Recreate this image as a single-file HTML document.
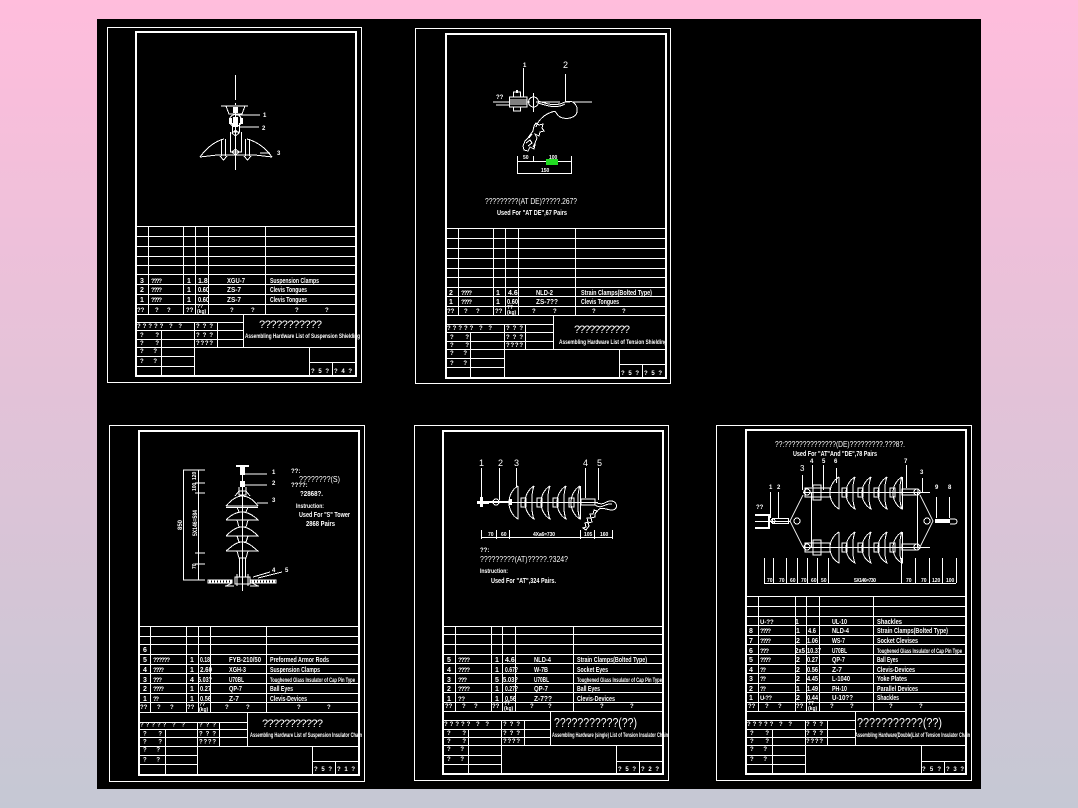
<!DOCTYPE html>
<html><head><meta charset="utf-8"><title>Drawings</title>
<style>
html,body{margin:0;padding:0;width:1078px;height:808px;overflow:hidden;background:linear-gradient(#ffbddc,#c5c8d4)}
svg{position:absolute;left:0;top:0;display:block}
path,rect.l,circle{fill:none;stroke:#fff;stroke-width:1;shape-rendering:crispEdges}
rect.l.f{stroke-width:2}
.w{fill:#fff}
text{fill:#fff;font:700 7px "Liberation Sans",sans-serif}
text.a{font-size:6px}text.b{font-size:8px;font-weight:400}text.c{font-size:9px;font-weight:400}text.d{font-size:11px;font-weight:400}text.e{font-size:13px;font-weight:400}text.g{font-size:5px}
</style></head><body>
<svg width="1078" height="808" viewBox="0 0 1078 808" xmlns="http://www.w3.org/2000/svg">
<rect x="97" y="19" width="884" height="770" fill="#000"/>

<!-- SHEET 1 -->
<rect class="l" x="107.500" y="27.500" width="254" height="355"/>
<rect class="l f" x="136" y="32" width="220" height="344"/>
<path d="M136 226.500H356M136 236.500H356M136 246.500H356M136 256.500H356M136 265.500H356M136 274.500H356M136 284.500H356M136 294.500H356M136 304.500H356M136 314.500H356M148.500 226V314M183.500 226V314M195.500 226V314M208.500 226V314M265.500 226V314
M136 322.500H243M136 330.500H243M136 339.500H243M136 347.500H356M136 356.500H194M136 366.500H194M243.500 314V347M161.500 330V376M194.500 322V376M217.500 322V347M309.500 347V376M309 362.500H356M332.500 362V376"/>
<path d="M235.500 75V100M235.500 103V105M235.500 108V170M221 106H248M226 106L229 114H242L245 106M235 115H260M240 127H259M232.500 123V132H239.500V123M230.500 132V152H241.500V132M200 157C208 146,216 141,224 139M247 139C255 141,264 146,272 157M200 157L217 155H255L272 157M221.500 139V156M225.500 139V156M245.500 139V156M249.500 139V156M220 156L223.500 160L227 156M244 156L247.500 160L251 156M232 152L235.500 149L239 152L235.500 155ZM260 153H270M232 133L235.500 130L239 133L235.500 136Z"/>
<rect class="w" x="233" y="107" width="5" height="6"/><rect class="w" x="233" y="117" width="5" height="10"/>
<circle cx="235.500" cy="120.500" r="6"/><rect class="w" x="229" y="118" width="3" height="6"/><rect class="w" x="240" y="118" width="3" height="6"/>
<text x="263" y="117" class="a">1</text><text x="262" y="130" class="a">2</text><text x="277" y="155" class="a">3</text>
<text x="140" y="283">3</text><text x="151" y="283" textLength="11" class="a">????</text><text x="187" y="283">1</text><text x="198" y="283">1.8</text><text x="227" y="283" textLength="18" lengthAdjust="spacingAndGlyphs">XGU-7</text><text x="270" y="283" textLength="49" lengthAdjust="spacingAndGlyphs">Suspension Clamps</text>
<text x="140" y="292">2</text><text x="151" y="292" textLength="11" class="a">????</text><text x="187" y="292">1</text><text x="198" y="292" textLength="11" lengthAdjust="spacingAndGlyphs">0.60</text><text x="227" y="292" textLength="14" lengthAdjust="spacingAndGlyphs">ZS-7</text><text x="270" y="292" textLength="37" lengthAdjust="spacingAndGlyphs">Clevis Tongues</text>
<text x="140" y="302">1</text><text x="151" y="302" textLength="11" class="a">????</text><text x="187" y="302">1</text><text x="198" y="302" textLength="11" lengthAdjust="spacingAndGlyphs">0.60</text><text x="227" y="302" textLength="14" lengthAdjust="spacingAndGlyphs">ZS-7</text><text x="270" y="302" textLength="37" lengthAdjust="spacingAndGlyphs">Clevis Tongues</text>
<text x="137" y="312" class="a">??</text><text x="155" y="312" class="a">?</text><text x="167" y="312" class="a">?</text><text x="186" y="312" class="a">??</text><text x="197" y="308" class="g">??</text><text x="197" y="313" class="g">(kg)</text><text x="230" y="312" class="a">?</text><text x="251" y="312" class="a">?</text><text x="295" y="312" class="a">?</text><text x="325" y="312" class="a">?</text>
<text x="259" y="328" class="d" textLength="63">???????????</text>
<text x="245" y="338" class="a" textLength="115" lengthAdjust="spacingAndGlyphs">Assembling Hardware List of Suspension Shielding</text>
<g><text x="137" y="328" class="a" textLength="45">????? ? ?</text><text x="196" y="328" class="a" textLength="17">? ? ?</text><text x="140" y="337" class="a" textLength="19">? ?</text><text x="196" y="337" class="a" textLength="17">? ? ?</text><text x="140" y="345" class="a" textLength="19">? ?</text><text x="196" y="345" class="a" textLength="17">????</text><text x="140" y="353" class="a" textLength="17">? ?</text><text x="140" y="363" class="a" textLength="17">? ?</text></g>
<text x="311" y="373" class="a" textLength="18">? 5 ?</text><text x="334" y="373" class="a" textLength="18">? 4 ?</text>

<!-- SHEET 2 -->
<rect class="l" x="415.500" y="28.500" width="255" height="355"/>
<rect class="l f" x="446" y="34" width="220" height="344"/>
<path d="M446 228.500H666M446 238.500H666M446 248.500H666M446 258.500H666M446 268.500H666M446 277.500H666M446 287.500H666M446 296.500H666M446 306.500H666M446 315.500H666M458.500 228V315M493.500 228V315M505.500 228V315M518.500 228V315M575.500 228V315
M446 324.500H553M446 332.500H553M446 341.500H553M446 349.500H666M446 358.500H504M446 367.500H504M553.500 315V349M470.500 332V378M504.500 324V378M525.500 324V349M619.500 349V378M619 364.500H666M642.500 364V378"/>
<path d="M523.500 68V97M565.500 74V102M493 102H530M536 102H560M565 102H570M573 102H592M509.500 97H527V107H509.500ZM509 100H527M509 104H527M513.500 92V97H520.500V92ZM513.500 107V111H520.500V107ZM496 105H509M533.500 93V112"/>
<circle cx="533.500" cy="102" r="5"/><rect class="w" x="516" y="90" width="2" height="3"/>
<path d="M538 101C548 104,555 107,565 102C574 99,578 106,577 112C576 118,566 120,560 117C555 114,557 110,552 112C545 114,538 120,536 127M538 103C548 106,556 109,565 104"/>
<path d="M536 123L539 125L543 124L542 128L544 131L540 132L539 136L535 134L537 138L535 143L533 147L535 145L534 149L530 147L528 151L524 150L523 146L525 141L528 138L530 135L533 131L534 126ZM529 138L532 134M526 143L530 140L532 143L528 146"/>
<path d="M517.500 156V174M571.500 156V174M517 161.500H571M517 173.500H571M533.500 156V162"/>
<rect x="546" y="159" width="12" height="6" fill="#22dc22"/>
<text x="523" y="159" class="g">50</text><text x="549" y="159" class="g">100</text><text x="541" y="172" class="g">150</text>
<text x="523" y="67" class="a">1</text><text x="563" y="68" class="c">2</text><text x="496" y="99" class="a">??</text>
<text x="485" y="204" class="b" textLength="92" lengthAdjust="spacingAndGlyphs">?????????(AT DE)?????.267?</text>
<text x="497" y="215" textLength="70" lengthAdjust="spacingAndGlyphs">Used For "AT DE",67 Pairs</text>
<text x="449" y="295">2</text><text x="461" y="295" textLength="11" class="a">????</text><text x="496" y="295">1</text><text x="508" y="295">4.6</text><text x="536" y="295" textLength="17" lengthAdjust="spacingAndGlyphs">NLD-2</text><text x="581" y="295" textLength="71" lengthAdjust="spacingAndGlyphs">Strain Clamps(Bolted Type)</text>
<text x="449" y="304">1</text><text x="461" y="304" textLength="11" class="a">????</text><text x="496" y="304">1</text><text x="507" y="304" textLength="11" lengthAdjust="spacingAndGlyphs">0.60</text><text x="536" y="304" textLength="22" lengthAdjust="spacingAndGlyphs">ZS-7??</text><text x="581" y="304" textLength="38" lengthAdjust="spacingAndGlyphs">Clevis Tongues</text>
<text x="447" y="313" class="a">??</text><text x="464" y="313" class="a">?</text><text x="476" y="313" class="a">?</text><text x="495" y="313" class="a">??</text><text x="507" y="309" class="g">??</text><text x="507" y="314" class="g">(kg)</text><text x="532" y="313" class="a">?</text><text x="553" y="313" class="a">?</text><text x="592" y="313" class="a">?</text><text x="622" y="313" class="a">?</text>
<text x="574" y="333" class="d" textLength="56">???????????</text>
<text x="559" y="344" class="a" textLength="108" lengthAdjust="spacingAndGlyphs">Assembling Hardware List of Tension Shielding</text>
<g transform="translate(310,2)"><text x="137" y="328" class="a" textLength="45">????? ? ?</text><text x="196" y="328" class="a" textLength="17">? ? ?</text><text x="140" y="337" class="a" textLength="19">? ?</text><text x="196" y="337" class="a" textLength="17">? ? ?</text><text x="140" y="345" class="a" textLength="19">? ?</text><text x="196" y="345" class="a" textLength="17">????</text><text x="140" y="353" class="a" textLength="17">? ?</text><text x="140" y="363" class="a" textLength="17">? ?</text></g>
<text x="621" y="375" class="a" textLength="18">? 5 ?</text><text x="644" y="375" class="a" textLength="18">? 5 ?</text>

<!-- SHEET 3 -->
<rect class="l" x="109.500" y="425.500" width="255" height="356"/>
<rect class="l f" x="139" y="431" width="220" height="344"/>
<path d="M139 626.500H359M139 636.500H359M139 644.500H359M139 654.500H359M139 664.500H359M139 673.500H359M139 683.500H359M139 693.500H359M139 702.500H359M139 712.500H359M150.500 626V712M186.500 626V712M198.500 626V712M210.500 626V712M266.500 626V712
M139 722.500H247M139 729.500H247M139 737.500H247M139 746.500H359M139 755.500H197M139 764.500H197M247.500 712V746M165.500 729V775M197.500 722V775M219.500 722V746M312.500 746V775M312 761.500H359M335.500 761V775"/>
<path d="M242.500 465V591M243 474H267M243 485H267M257 503H268"/>
<rect class="w" x="236" y="465" width="13" height="2"/><rect class="w" x="240" y="467" width="5" height="8"/><rect class="w" x="240" y="481" width="5" height="6"/>
<path d="M239 487V495H246V487M226 506C232 499,237 496,242 496C248 496,253 499,258 506M226 506H258M226 507.500H258M235 496L239 491H246L250 496M226 520C231 515,236 512,242 512C248 512,253 515,258 520H226M237 507L239 512H246L248 507M226 536C231 531,236 527,242 527C248 527,253 531,258 536H226M237 520L239 527H246L248 520M226 551C231 547,236 542,242 542C248 542,253 547,258 551H226M237 536L239 542H246L248 536M237 551L239 558H246L248 551M239.500 558V577M245.500 558V577M235 577H250V584H235ZM237 574V586M248 574V586"/>
<path d="M208 580H232V583H208ZM251 580H276V583H251Z"/><path d="M209 581.500H232M252 581.500H275" stroke-dasharray="2 1" style="stroke-width:2"/>
<path d="M225 586H234M250 586H259M226 586L232 583M258 586L252 583M253 577L270 572M258 578L282 572"/>
<path d="M183.500 470V580M183 470H205M183 580H205M198.500 470V580M195 483H205M195 493H205M195 553H205M195 564H205"/>
<text transform="translate(182,530) rotate(-90)" class="a">850</text>
<text transform="translate(197,536) rotate(-90)" class="a" textLength="26" lengthAdjust="spacingAndGlyphs">5X146=584</text>
<text transform="translate(196,480) rotate(-90)" class="g">120</text><text transform="translate(196,491) rotate(-90)" class="g">100</text><text transform="translate(196,569) rotate(-90)" class="g">70</text>
<text x="272" y="474" class="a">1</text><text x="272" y="485" class="a">2</text><text x="272" y="502" class="a">3</text><text x="272" y="572" class="a">4</text><text x="285" y="572" class="a">5</text>
<text x="291" y="473" class="a">??:</text><text x="299" y="482" class="b" textLength="41" lengthAdjust="spacingAndGlyphs">????????(S)</text><text x="291" y="487" class="a">????:</text><text x="300" y="496" textLength="23" lengthAdjust="spacingAndGlyphs">?2868?.</text>
<text x="296" y="508" class="a" textLength="28" lengthAdjust="spacingAndGlyphs">Instruction:</text><text x="299" y="517" textLength="51" lengthAdjust="spacingAndGlyphs">Used For "S" Tower</text><text x="306" y="526" textLength="29" lengthAdjust="spacingAndGlyphs">2868 Pairs</text>
<text x="143" y="652">6</text>
<text x="143" y="662">5</text><text x="153" y="662" textLength="17" class="a">??????</text><text x="190" y="662">1</text><text x="200" y="662" textLength="10" lengthAdjust="spacingAndGlyphs">0.18</text><text x="229" y="662" textLength="32" lengthAdjust="spacingAndGlyphs">FYB-210/50</text><text x="270" y="662" textLength="59" lengthAdjust="spacingAndGlyphs">Preformed Armor Rods</text>
<text x="143" y="672">4</text><text x="153" y="672" textLength="11" class="a">????</text><text x="190" y="672">1</text><text x="200" y="672" textLength="12" lengthAdjust="spacingAndGlyphs">2.60</text><text x="229" y="672" textLength="17" lengthAdjust="spacingAndGlyphs">XGH-3</text><text x="270" y="672" textLength="50" lengthAdjust="spacingAndGlyphs">Suspension Clamps</text>
<text x="143" y="682">3</text><text x="153" y="682" textLength="9" class="a">???</text><text x="190" y="682">4</text><text x="198" y="682" textLength="14" lengthAdjust="spacingAndGlyphs">5.03?</text><text x="229" y="682" textLength="15" lengthAdjust="spacingAndGlyphs">U70BL</text><text x="270" y="682" class="a" textLength="85" lengthAdjust="spacingAndGlyphs">Toughened Glass Insulator of Cap Pin Type</text>
<text x="143" y="691">2</text><text x="153" y="691" textLength="11" class="a">????</text><text x="190" y="691">1</text><text x="200" y="691" textLength="11" lengthAdjust="spacingAndGlyphs">0.27</text><text x="229" y="691" textLength="13" lengthAdjust="spacingAndGlyphs">QP-7</text><text x="270" y="691" textLength="23" lengthAdjust="spacingAndGlyphs">Ball Eyes</text>
<text x="143" y="701">1</text><text x="153" y="701" textLength="6" class="a">??</text><text x="190" y="701">1</text><text x="200" y="701" textLength="11" lengthAdjust="spacingAndGlyphs">0.56</text><text x="229" y="701" textLength="10" lengthAdjust="spacingAndGlyphs">Z-7</text><text x="270" y="701" textLength="37" lengthAdjust="spacingAndGlyphs">Clevis-Devices</text>
<text x="140" y="709" class="a">??</text><text x="157" y="709" class="a">?</text><text x="170" y="709" class="a">?</text><text x="187" y="709" class="a">??</text><text x="199" y="706" class="g">??</text><text x="199" y="711" class="g">(kg)</text><text x="225" y="709" class="a">?</text><text x="246" y="709" class="a">?</text><text x="297" y="709" class="a">?</text><text x="327" y="709" class="a">?</text>
<text x="262" y="727" class="d" textLength="61">???????????</text>
<text x="250" y="737" class="a" textLength="112" lengthAdjust="spacingAndGlyphs">Assembling Hardware List of Suspension Insulator Chain</text>
<g transform="translate(3,398.500)"><text x="137" y="328" class="a" textLength="45">????? ? ?</text><text x="196" y="328" class="a" textLength="17">? ? ?</text><text x="140" y="337" class="a" textLength="19">? ?</text><text x="196" y="337" class="a" textLength="17">? ? ?</text><text x="140" y="345" class="a" textLength="19">? ?</text><text x="196" y="345" class="a" textLength="17">????</text><text x="140" y="353" class="a" textLength="17">? ?</text><text x="140" y="363" class="a" textLength="17">? ?</text></g>
<text x="314" y="771" class="a" textLength="18">? 5 ?</text><text x="337" y="771" class="a" textLength="18">? 1 ?</text>

<!-- SHEET 4 -->
<rect class="l" x="414.500" y="425.500" width="254" height="355"/>
<rect class="l f" x="443" y="431" width="220" height="343"/>
<path d="M443 626.500H663M443 634.500H663M443 644.500H663M443 654.500H663M443 663.500H663M443 673.500H663M443 683.500H663M443 692.500H663M443 702.500H663M443 711.500H663M455.500 626V711M491.500 626V711M502.500 626V711M515.500 626V711M573.500 626V711
M443 720.500H550M443 729.500H550M443 737.500H550M443 745.500H663M443 755.500H501M443 764.500H501M550.500 711V745M468.500 729V774M501.500 720V774M524.500 720V745M616.500 745V774M616 761.500H663M639.500 761V774"/>
<path d="M481.500 468V500M499.500 468V500M516.500 468V487M585.500 468V498M598.500 468V500M477 502.500H598"/>
<rect class="w" x="480" y="497" width="3" height="10"/><rect class="w" x="477" y="501" width="12" height="3"/><rect class="w" x="489" y="501" width="20" height="2"/>
<circle cx="496" cy="502" r="3"/><rect class="w" x="509" y="499" width="3" height="6"/>
<path d="M518 486C506 493,506 512,518 519V486M534 486C522 493,522 512,534 519C531 512,531 493,534 486M550 486C538 493,538 512,550 519C547 512,547 493,550 486M566 486C554 493,554 512,566 519C563 512,563 493,566 486M580 486C568 493,568 512,580 519C577 512,577 493,580 486M580.500 486V519"/>
<path d="M521 498H526V507H521ZM537 498H542V507H537ZM553 498H558V507H553ZM569 498H574V507H569Z"/>
<path d="M581 499H595V505H581ZM595 502C605 507,605 500,612 501C618 502,618 510,612 510C606 510,600 505,597 512M595 505C603 510,603 503,612 504"/>
<path d="M597 511L594 510L593 514L590 514L591 518L587 518L588 522L585 523L586 527L583 528L586 530L589 526L588 523L592 522L591 518L595 517L595 514Z"/>
<path d="M481 537.500H612M481.500 530V539M496.500 530V539M509.500 530V539M580.500 530V539M594.500 530V539M612.500 530V539"/>
<text x="488" y="536" class="g">70</text><text x="501" y="536" class="g">60</text><text x="533" y="536" class="g" textLength="22">4Xa6=730</text><text x="584" y="536" class="g">105</text><text x="600" y="536" class="g">160</text>
<text x="479" y="466" class="c">1</text><text x="498" y="466" class="c">2</text><text x="514" y="466" class="c">3</text><text x="583" y="466" class="c">4</text><text x="597" y="466" class="c">5</text>
<text x="480" y="552" class="a">??:</text><text x="480" y="562" class="b" textLength="88" lengthAdjust="spacingAndGlyphs">?????????(AT)?????.?324?</text>
<text x="480" y="573" class="a" textLength="28" lengthAdjust="spacingAndGlyphs">Instruction:</text><text x="491" y="583" textLength="65" lengthAdjust="spacingAndGlyphs">Used For "AT",324 Pairs.</text>
<text x="447" y="662">5</text><text x="458" y="662" textLength="12" class="a">????</text><text x="495" y="662">1</text><text x="505" y="662">4.6</text><text x="534" y="662" textLength="17" lengthAdjust="spacingAndGlyphs">NLD-4</text><text x="577" y="662" textLength="70" lengthAdjust="spacingAndGlyphs">Strain Clamps(Bolted Type)</text>
<text x="447" y="672">4</text><text x="458" y="672" textLength="12" class="a">????</text><text x="495" y="672">1</text><text x="505" y="672" textLength="13" lengthAdjust="spacingAndGlyphs">0.67?</text><text x="534" y="672" textLength="14" lengthAdjust="spacingAndGlyphs">W-7B</text><text x="577" y="672" textLength="31" lengthAdjust="spacingAndGlyphs">Socket Eyes</text>
<text x="447" y="682">3</text><text x="458" y="682" textLength="9" class="a">???</text><text x="495" y="682">5</text><text x="503" y="682" textLength="15" lengthAdjust="spacingAndGlyphs">5.03?</text><text x="534" y="682" textLength="15" lengthAdjust="spacingAndGlyphs">U70BL</text><text x="577" y="682" class="a" textLength="85" lengthAdjust="spacingAndGlyphs">Toughened Glass Insulator of Cap Pin Type</text>
<text x="447" y="691">2</text><text x="458" y="691" textLength="12" class="a">????</text><text x="495" y="691">1</text><text x="505" y="691" textLength="13" lengthAdjust="spacingAndGlyphs">0.27?</text><text x="534" y="691" textLength="14" lengthAdjust="spacingAndGlyphs">QP-7</text><text x="577" y="691" textLength="23" lengthAdjust="spacingAndGlyphs">Ball Eyes</text>
<text x="447" y="701">1</text><text x="458" y="701" textLength="7" class="a">??</text><text x="495" y="701">1</text><text x="505" y="701" textLength="11" lengthAdjust="spacingAndGlyphs">0.56</text><text x="534" y="701" textLength="18" lengthAdjust="spacingAndGlyphs">Z-7??</text><text x="577" y="701" textLength="38" lengthAdjust="spacingAndGlyphs">Clevis-Devices</text>
<text x="445" y="708" class="a">??</text><text x="462" y="708" class="a">?</text><text x="474" y="708" class="a">?</text><text x="492" y="708" class="a">??</text><text x="504" y="705" class="g">??</text><text x="504" y="710" class="g">(kg)</text><text x="530" y="708" class="a">?</text><text x="548" y="708" class="a">?</text><text x="600" y="708" class="a">?</text><text x="630" y="708" class="a">?</text>
<text x="554" y="727" class="e" textLength="83" lengthAdjust="spacingAndGlyphs">???????????(??)</text>
<text x="552" y="737" class="a" textLength="116" lengthAdjust="spacingAndGlyphs">Assembling Hardware (single) List of Tension Insulator Chain</text>
<g transform="translate(307,398)"><text x="137" y="328" class="a" textLength="45">????? ? ?</text><text x="196" y="328" class="a" textLength="17">? ? ?</text><text x="140" y="337" class="a" textLength="19">? ?</text><text x="196" y="337" class="a" textLength="17">? ? ?</text><text x="140" y="345" class="a" textLength="19">? ?</text><text x="196" y="345" class="a" textLength="17">????</text><text x="140" y="353" class="a" textLength="17">? ?</text><text x="140" y="363" class="a" textLength="17">? ?</text></g>
<text x="618" y="771" class="a" textLength="18">? 5 ?</text><text x="641" y="771" class="a" textLength="18">? 2 ?</text>

<!-- SHEET 5 -->
<rect class="l" x="716.500" y="425.500" width="255" height="355"/>
<rect class="l f" x="746" y="430" width="220" height="344"/>
<path d="M746 596.500H966M746 606.500H966M746 616.500H966M746 625.500H966M746 635.500H966M746 644.500H966M746 654.500H966M746 664.500H966M746 673.500H966M746 683.500H966M746 692.500H966M746 702.500H966M746 711.500H966M758.500 596V711M795.500 596V711M806.500 596V711M819.500 596V711M873.500 596V711
M746 720.500H855M746 729.500H855M746 737.500H855M746 745.500H966M746 755.500H805M746 764.500H805M855.500 711V745M772.500 729V774M805.500 720V774M827.500 720V745M921.500 745V774M921 761.500H966M944.500 761V774"/>
<path d="M770.500 492V518M778.500 492V518M802.500 475V490M812.500 465V487M823.500 465V490M836.500 468V483M906.500 465V488M922.500 478V493M936.500 497V518M949.500 497V518"/>
<path d="M755 515.500H769V528M755 528.500H769M755 521.500H790M790 521L803 495M790 521L803 547M803 492.500H930M803 547.500H930M811.500 492V547M917.500 492V547M935 521.500H950M933 521L920 495M933 521L920 547M950 519H954C958 519,958 524,954 524H950"/>
<rect class="w" x="755" y="514" width="14" height="2"/><rect class="w" x="755" y="527" width="14" height="2"/><rect class="w" x="768" y="514" width="2" height="15"/><rect class="w" x="935" y="519" width="15" height="4"/>
<rect class="l" x="772.500" y="518.500" width="16" height="5"/>
<circle cx="797" cy="521" r="3"/><circle cx="927" cy="521" r="3"/><circle cx="773" cy="521" r="2"/>
<path d="M805 488H830V497H805ZM805 543H830V552H805ZM813 485H821V500H813ZM813 540H821V555H813ZM902 489H918V495H902ZM902 544H918V550H902Z"/>
<circle cx="807" cy="492" r="3"/><circle cx="807" cy="547" r="3"/><circle cx="917" cy="492" r="3"/><circle cx="917" cy="547" r="3"/>
<path d="M839 477C827 484,827 502,839 509V477M855 477C843 484,843 502,855 509C852 502,852 484,855 477M871 477C859 484,859 502,871 509C868 502,868 484,871 477M887 477C875 484,875 502,887 509C884 502,884 484,887 477M902 477C890 484,890 502,902 509C899 502,899 484,902 477M902.500 477V509"/>
<path d="M839 532C827 539,827 557,839 563V532M855 532C843 539,843 557,855 563C852 557,852 539,855 532M871 532C859 539,859 557,871 563C868 557,868 539,871 532M887 532C875 539,875 557,887 563C884 557,884 539,887 532M902 532C890 539,890 557,902 563C899 557,899 539,902 532M902.500 532V563"/>
<path d="M842 488H847V497H842ZM858 488H863V497H858ZM874 488H879V497H874ZM890 488H895V497H890ZM842 543H847V552H842ZM858 543H863V552H858ZM874 543H879V552H874ZM890 543H895V552H890Z"/>
<path d="M764 583.500H956M764.500 558V583M773.500 558V583M786.500 558V583M797.500 558V583M807.500 558V583M817.500 558V583M828.500 558V583M901.500 558V583M915.500 558V583M929.500 558V583M942.500 558V583M956.500 558V583"/>
<text x="767" y="582" class="g">70</text><text x="779" y="582" class="g">70</text><text x="790" y="582" class="g">60</text><text x="801" y="582" class="g">70</text><text x="811" y="582" class="g">60</text><text x="821" y="582" class="g">50</text><text x="854" y="582" class="g" textLength="22">5X146=730</text><text x="906" y="582" class="g">70</text><text x="921" y="582" class="g">70</text><text x="932" y="582" class="g">120</text><text x="946" y="582" class="g">100</text>
<text x="775" y="447" class="b" textLength="130" lengthAdjust="spacingAndGlyphs">??:??????????????(DE)?????????.???8?.</text>
<text x="793" y="456" textLength="84" lengthAdjust="spacingAndGlyphs">Used For "AT"And "DE",78 Pairs</text>
<text x="769" y="489" class="a">1</text><text x="777" y="489" class="a">2</text><text x="800" y="471" class="b">3</text><text x="810" y="463" class="a">4</text><text x="822" y="463" class="a">5</text><text x="834" y="463" class="a">6</text><text x="904" y="463" class="a">7</text><text x="920" y="474" class="a">3</text><text x="935" y="489" class="a">9</text><text x="948" y="489" class="a">8</text><text x="756" y="509" class="a">??</text>
<text x="760" y="624" class="a">U-??</text><text x="795" y="624">1</text><text x="832" y="624" textLength="15" lengthAdjust="spacingAndGlyphs">UL-10</text><text x="877" y="624" textLength="25" lengthAdjust="spacingAndGlyphs">Shackles</text>
<text x="749" y="633">8</text><text x="760" y="633" textLength="11" class="a">????</text><text x="796" y="633">1</text><text x="808" y="633" textLength="8" lengthAdjust="spacingAndGlyphs">4.6</text><text x="832" y="633" textLength="17" lengthAdjust="spacingAndGlyphs">NLD-4</text><text x="877" y="633" textLength="71" lengthAdjust="spacingAndGlyphs">Strain Clamps(Bolted Type)</text>
<text x="749" y="643">7</text><text x="760" y="643" textLength="11" class="a">????</text><text x="796" y="643">2</text><text x="807" y="643" textLength="11" lengthAdjust="spacingAndGlyphs">1.06</text><text x="832" y="643" textLength="13" lengthAdjust="spacingAndGlyphs">WS-7</text><text x="877" y="643" textLength="41" lengthAdjust="spacingAndGlyphs">Socket Clevises</text>
<text x="749" y="653">6</text><text x="760" y="653" textLength="9" class="a">???</text><text x="795" y="653" textLength="10" lengthAdjust="spacingAndGlyphs">2x5</text><text x="807" y="653" textLength="14" lengthAdjust="spacingAndGlyphs">10.37</text><text x="832" y="653" textLength="15" lengthAdjust="spacingAndGlyphs">U70BL</text><text x="877" y="653" class="a" textLength="85" lengthAdjust="spacingAndGlyphs">Toughened Glass Insulator of Cap Pin Type</text>
<text x="749" y="662">5</text><text x="760" y="662" textLength="11" class="a">????</text><text x="796" y="662">2</text><text x="807" y="662" textLength="11" lengthAdjust="spacingAndGlyphs">0.27</text><text x="832" y="662" textLength="13" lengthAdjust="spacingAndGlyphs">QP-7</text><text x="877" y="662" textLength="21" lengthAdjust="spacingAndGlyphs">Ball Eyes</text>
<text x="749" y="672">4</text><text x="760" y="672" textLength="6" class="a">??</text><text x="796" y="672">2</text><text x="807" y="672" textLength="11" lengthAdjust="spacingAndGlyphs">0.56</text><text x="832" y="672" textLength="10" lengthAdjust="spacingAndGlyphs">Z-7</text><text x="877" y="672" textLength="38" lengthAdjust="spacingAndGlyphs">Clevis-Devices</text>
<text x="749" y="681">3</text><text x="760" y="681" textLength="6" class="a">??</text><text x="796" y="681">2</text><text x="807" y="681" textLength="11" lengthAdjust="spacingAndGlyphs">4.45</text><text x="832" y="681" textLength="18" lengthAdjust="spacingAndGlyphs">L-1040</text><text x="877" y="681" textLength="30" lengthAdjust="spacingAndGlyphs">Yoke Plates</text>
<text x="749" y="691">2</text><text x="760" y="691" textLength="6" class="a">??</text><text x="796" y="691">1</text><text x="807" y="691" textLength="11" lengthAdjust="spacingAndGlyphs">1.49</text><text x="832" y="691" textLength="15" lengthAdjust="spacingAndGlyphs">PH-10</text><text x="877" y="691" textLength="41" lengthAdjust="spacingAndGlyphs">Parallel Devices</text>
<text x="749" y="700">1</text><text x="760" y="700" class="a" textLength="12">U-??</text><text x="796" y="700">2</text><text x="807" y="700" textLength="11" lengthAdjust="spacingAndGlyphs">0.44</text><text x="832" y="700" textLength="21" lengthAdjust="spacingAndGlyphs">U-10??</text><text x="877" y="700" textLength="22" lengthAdjust="spacingAndGlyphs">Shackles</text>
<text x="748" y="708" class="a">??</text><text x="765" y="708" class="a">?</text><text x="778" y="708" class="a">?</text><text x="796" y="708" class="a">??</text><text x="808" y="705" class="g">??</text><text x="808" y="710" class="g">(kg)</text><text x="830" y="708" class="a">?</text><text x="850" y="708" class="a">?</text><text x="889" y="708" class="a">?</text><text x="919" y="708" class="a">?</text>
<text x="857" y="727" class="e" textLength="85" lengthAdjust="spacingAndGlyphs">???????????(??)</text>
<text x="855" y="737" class="a" textLength="115" lengthAdjust="spacingAndGlyphs">Assembling Hardware(Double)List of Tension Insulator Chain</text>
<g transform="translate(610,398)"><text x="137" y="328" class="a" textLength="45">????? ? ?</text><text x="196" y="328" class="a" textLength="17">? ? ?</text><text x="140" y="337" class="a" textLength="19">? ?</text><text x="196" y="337" class="a" textLength="17">? ? ?</text><text x="140" y="345" class="a" textLength="19">? ?</text><text x="196" y="345" class="a" textLength="17">????</text><text x="140" y="353" class="a" textLength="17">? ?</text><text x="140" y="363" class="a" textLength="17">? ?</text></g>
<text x="922" y="771" class="a" textLength="19">? 5 ?</text><text x="946" y="771" class="a" textLength="18">? 3 ?</text>
</svg>
</body></html>
